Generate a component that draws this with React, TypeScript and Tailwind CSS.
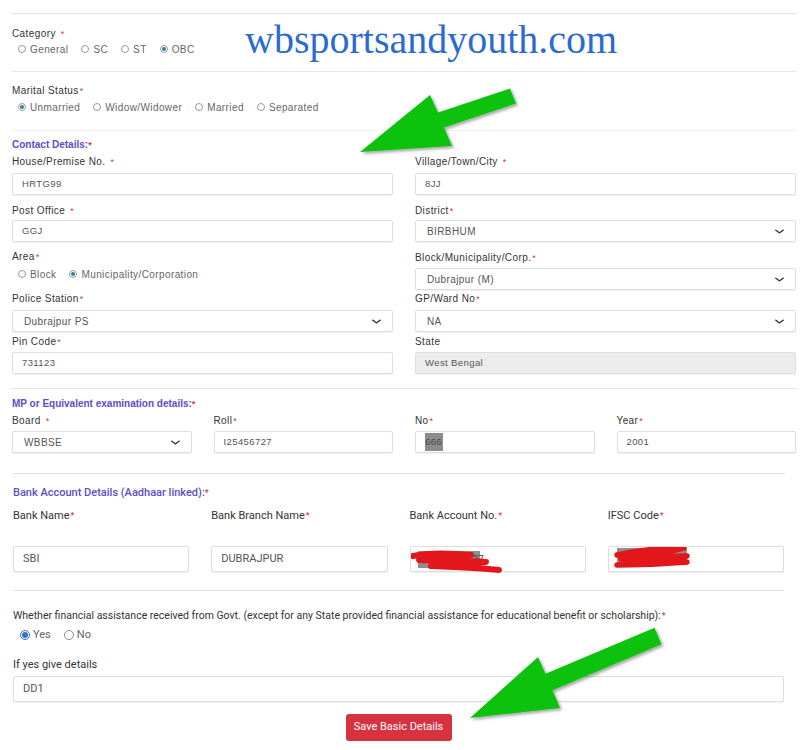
import React from 'react';
import { ChevronDown } from 'lucide-react';

const Star: React.FC<{ gap?: boolean }> = ({ gap }) => (
  <span className={`text-[#d9363e] text-[9px] align-top ${gap ? 'ml-[5px]' : 'ml-[1px]'}`}>*</span>
);

const Label: React.FC<{ text: string; gap?: boolean; star?: boolean }> = ({ text, gap, star = true }) => (
  <div className="h-[12px] leading-[12px] text-[10px] tracking-[0.4px] text-[#333]">
    {text}
    {star && <Star gap={gap} />}
  </div>
);

const Radio: React.FC<{ label: string; checked?: boolean }> = ({ label, checked }) => (
  <span className="flex items-center gap-[4px]">
    <span className="w-[8px] h-[8px] rounded-full border border-[#9a9a9a] flex items-center justify-center">
      {checked && <span className="w-[4px] h-[4px] rounded-full bg-[#2f8390]" />}
    </span>
    <span>{label}</span>
  </span>
);

const RadioRow: React.FC<{ items: string[]; checked: number }> = ({ items, checked }) => (
  <div className="flex items-center gap-[13px] pl-[6px] h-[12px] text-[10px] tracking-[0.4px] text-[#666]">
    {items.map((it, i) => (
      <Radio key={it} label={it} checked={i === checked} />
    ))}
  </div>
);

const Field: React.FC<{ value: React.ReactNode; disabled?: boolean }> = ({ value, disabled }) => (
  <div
    className={`h-[22px] flex items-center pl-[9px] border border-[#dedede] rounded-[2px] shadow-[0_1px_1px_rgba(0,0,0,0.06)] text-[9.5px] tracking-[0.4px] text-[#555] ${
      disabled ? 'bg-[#ececec]' : 'bg-white'
    }`}
  >
    {value}
  </div>
);

const Select: React.FC<{ value: string }> = ({ value }) => (
  <div className="h-[22px] flex items-center justify-between pl-[11px] pr-[8px] border border-[#dedede] rounded-[2px] shadow-[0_1px_1px_rgba(0,0,0,0.06)] text-[10px] tracking-[0.4px] text-[#555] bg-white">
    <span>{value}</span>
    <ChevronDown size={15} strokeWidth={2.6} className="text-[#333] scale-y-75" />
  </div>
);

const BankInput: React.FC<{ children?: React.ReactNode }> = ({ children }) => (
  <div className="relative h-[26px] flex items-center pl-[9px] border border-[#dedede] rounded-[2px] shadow-[0_1px_1px_rgba(0,0,0,0.06)] text-[11px] text-[#555] bg-white">
    {children}
  </div>
);

const BankLabel: React.FC<{ text: string }> = ({ text }) => (
  <div className="h-[14px] leading-[14px] text-[11px] text-[#333]">
    {text}
    <span className="text-[#d9363e] text-[9px] align-top ml-[1px]">*</span>
  </div>
);

export default function App() {
  return (
    <div className="relative w-[808px] h-[750px] bg-white overflow-hidden">
      <div className="px-3 pt-[13px] font-['Liberation_Sans',Arial,sans-serif]">
        <div className="border-t border-[#e3e3e3]" />

        <div className="mt-[14px]">
          <Label text="Category" gap />
        </div>
        <div className="mt-[3px]">
          <RadioRow items={['General', 'SC', 'ST', 'OBC']} checked={3} />
        </div>
        <div className="mt-[16px] border-t border-[#e6e6e6]" />

        <div className="mt-[13px]">
          <Label text="Marital Status" />
        </div>
        <div className="mt-[4px]">
          <RadioRow items={['Unmarried', 'Widow/Widower', 'Married', 'Separated']} checked={0} />
        </div>
        <div className="mt-[17px] border-t border-[#f0f0f0]" />

        <div className="mt-[8px] h-[12px] leading-[12px] text-[10px] font-bold text-[#5a4ec9]">
          Contact Details:<span className="text-[#d9363e] text-[9px] align-top">*</span>
        </div>

        <div className="mt-[5px] grid grid-cols-2 gap-x-[22px]">
          <div className="flex flex-col gap-[5px]">
            <Label text="House/Premise No." gap />
            <Field value="HRTG99" />
          </div>
          <div className="flex flex-col gap-[5px]">
            <Label text="Village/Town/City" gap />
            <Field value="8JJ" />
          </div>
        </div>

        <div className="mt-[10px] grid grid-cols-2 gap-x-[22px]">
          <div className="flex flex-col gap-[3px]">
            <Label text="Post Office" gap />
            <Field value="GGJ" />
          </div>
          <div className="flex flex-col gap-[3px]">
            <Label text="District" />
            <Select value="BIRBHUM" />
          </div>
        </div>

        <div className="mt-[9px] grid grid-cols-2 gap-x-[22px]">
          <div className="flex flex-col gap-[5px]">
            <Label text="Area" />
            <RadioRow items={['Block', 'Municipality/Corporation']} checked={1} />
          </div>
          <div className="flex flex-col gap-[4px] pt-[1px]">
            <Label text="Block/Municipality/Corp." />
            <Select value="Dubrajpur (M)" />
          </div>
        </div>

        <div className="mt-[3px] grid grid-cols-2 gap-x-[22px]">
          <div className="flex flex-col gap-[5px]">
            <Label text="Police Station" />
            <Select value="Dubrajpur PS" />
          </div>
          <div className="flex flex-col gap-[5px]">
            <Label text="GP/Ward No" />
            <Select value="NA" />
          </div>
        </div>

        <div className="mt-[4px] grid grid-cols-2 gap-x-[22px]">
          <div className="flex flex-col gap-[4px]">
            <Label text="Pin Code" />
            <Field value="731123" />
          </div>
          <div className="flex flex-col gap-[4px]">
            <Label text="State" star={false} />
            <Field value="West Bengal" disabled />
          </div>
        </div>

        <div className="mt-[14px] border-t border-[#e3e3e3]" />

        <div className="mt-[9px] h-[12px] leading-[12px] text-[10px] font-bold text-[#5a4ec9]">
          MP or Equivalent examination details:<span className="text-[#d9363e] text-[9px] align-top">*</span>
        </div>

        <div className="mt-[5px] grid grid-cols-4 gap-x-[22px]">
          <div className="flex flex-col gap-[4px]">
            <Label text="Board" gap />
            <Select value="WBBSE" />
          </div>
          <div className="flex flex-col gap-[4px]">
            <Label text="Roll" />
            <Field value="I25456727" />
          </div>
          <div className="flex flex-col gap-[4px]">
            <Label text="No" />
            <Field value={<span className="bg-[#8c8c8c] text-[#4a4a4a] py-[2px] pr-[1px]">666</span>} />
          </div>
          <div className="flex flex-col gap-[4px]">
            <Label text="Year" />
            <Field value="2001" />
          </div>
        </div>

        <div className="mt-[20px] mr-[11px] border-t border-[#e3e3e3]" />
      </div>

      <div className="pl-[13px] pr-[24px] font-[Roboto,sans-serif]">
        <div className="mt-[12px] h-[14px] leading-[14px] text-[11px] font-medium text-[#5a4ec9]">
          Bank Account Details (Aadhaar linked):<span className="text-[#d9363e] text-[9px] align-top">*</span>
        </div>

        <div className="mt-[9px] grid grid-cols-4 gap-x-[22px]">
          <div className="flex flex-col gap-[23px]">
            <BankLabel text="Bank Name" />
            <BankInput>SBI</BankInput>
          </div>
          <div className="flex flex-col gap-[23px]">
            <BankLabel text="Bank Branch Name" />
            <BankInput>DUBRAJPUR</BankInput>
          </div>
          <div className="flex flex-col gap-[23px]">
            <BankLabel text="Bank Account No." />
            <BankInput>
              <span className="absolute left-[7px] top-[4px] w-[62px] h-[17px] bg-[#8e8e8e]" />
              <span className="absolute left-[62px] top-[5px] text-[#444] text-[10px]">27</span>
              <svg className="absolute left-0 top-0" width="100" height="28" viewBox="0 0 100 28">
                <path d="M2 9 C20 5 40 6 60 8 C45 10 25 11 8 13 C30 14 55 13 75 15 C60 17 40 18 20 19 C45 20 70 21 88 23" fill="none" stroke="#e3171b" strokeWidth="6" strokeLinecap="round" strokeLinejoin="round" />
              </svg>
            </BankInput>
          </div>
          <div className="flex flex-col gap-[23px]">
            <BankLabel text="IFSC Code" />
            <BankInput>
              <span className="absolute left-[8px] top-[1px] w-[70px] h-[17px] bg-[#8e8e8e]" />
              <svg className="absolute left-0 top-0" width="90" height="28" viewBox="0 0 90 28">
                <path d="M8 8 C30 3 55 1 75 1 C60 5 35 9 12 12 C35 11 60 9 78 9 C60 14 35 16 8 18 C30 18 55 17 78 15" fill="none" stroke="#e3171b" strokeWidth="5.5" strokeLinecap="round" strokeLinejoin="round" />
              </svg>
            </BankInput>
          </div>
        </div>

        <div className="mt-[18px] border-t border-[#e3e3e3]" />

        <div className="mt-[18px] h-[14px] leading-[14px] text-[10.5px] text-[#333]">
          Whether financial assistance received from Govt. (except for any State provided financial assistance for educational benefit or scholarship):
          <span className="text-[#d9363e] text-[9px] align-top ml-[1px]">*</span>
        </div>

        <div className="mt-[5px] h-[14px] flex items-center gap-[13px] pl-[7px] text-[11px] text-[#666]">
          <span className="flex items-center gap-[3px]">
            <span className="w-[10px] h-[10px] rounded-full border border-[#3470c4] flex items-center justify-center">
              <span className="w-[6px] h-[6px] rounded-full bg-[#3470c4]" />
            </span>
            Yes
          </span>
          <span className="flex items-center gap-[3px]">
            <span className="w-[10px] h-[10px] rounded-full border border-[#8a8a8a]" />
            No
          </span>
        </div>

        <div className="mt-[16px] h-[14px] leading-[14px] text-[11px] text-[#333]">If yes give details</div>

        <div className="mt-[4px]">
          <BankInput>DD1</BankInput>
        </div>

        <div className="mt-[12px] flex justify-center">
          <button className="h-[27px] w-[106px] rounded-[3px] bg-[#d7323f] text-white text-[11px]">Save Basic Details</button>
        </div>
      </div>

      <div className="absolute left-[245px] top-[15px] font-['Liberation_Serif',serif] text-[40px] leading-[50px] text-[#2b6bd0]">
        wbsportsandyouth.com
      </div>

      <svg className="absolute left-0 top-0 pointer-events-none" width="808" height="750" viewBox="0 0 808 750">
        <defs>
          <filter id="sh" x="-20%" y="-20%" width="140%" height="140%">
            <feDropShadow dx="2" dy="2" stdDeviation="1.5" floodColor="#000" floodOpacity="0.35" />
          </filter>
        </defs>
        <polygon
          points="360,152 430,95 438,112.5 510,88.5 516,103.5 444,127.5 452,146"
          fill="#0bc20b"
          filter="url(#sh)"
        />
        <polygon
          points="470,718 538,657 545.5,673.7 654.5,627.7 661.5,644.3 552.5,690.3 560,708"
          fill="#0bc20b"
          filter="url(#sh)"
        />
      </svg>
    </div>
  );
}
